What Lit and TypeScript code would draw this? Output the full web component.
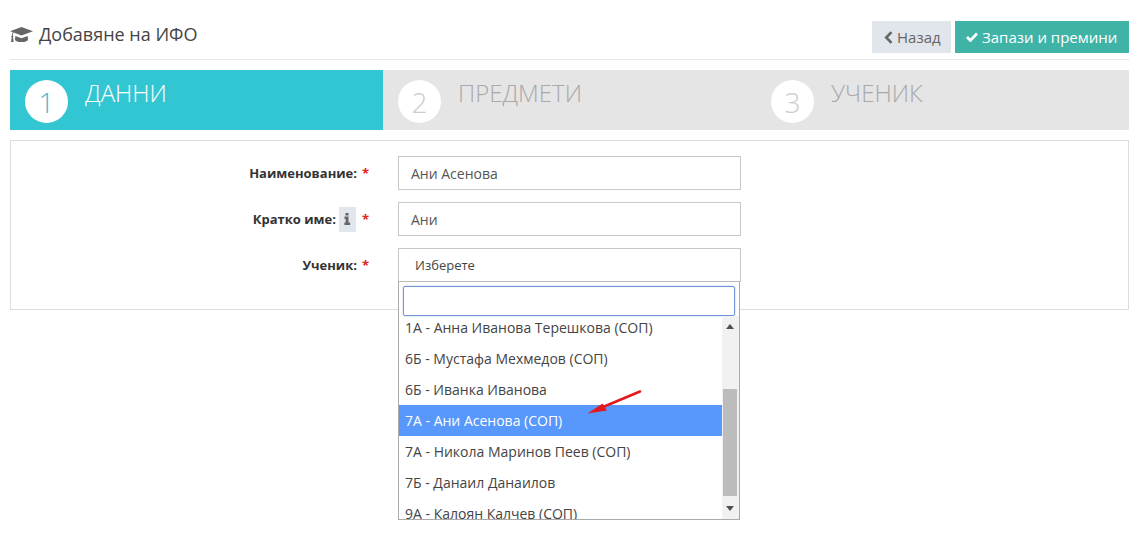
import { LitElement, html, css, svg } from "lit";
import { customElement } from "lit/decorators.js";

const items = [
  "1А - Анна Иванова Терешкова (СОП)",
  "6Б - Мустафа Мехмедов (СОП)",
  "6Б - Иванка Иванова",
  "7А - Ани Асенова (СОП)",
  "7А - Никола Маринов Пеев (СОП)",
  "7Б - Данаил Данаилов",
  "9А - Калоян Калчев (СОП)",
];

@customElement("app-root")
export class AppRoot extends LitElement {
  static styles = css`
    :host { display: block; height: 536px; overflow: hidden; background: #fff; font-family: "Open Sans", sans-serif; color: #333; box-sizing: border-box; padding: 0 11px 0 10px; }
    * { box-sizing: border-box; }
    .head { height: 60px; border-bottom: 1px solid #e7e7e7; display: flex; justify-content: space-between; padding-top: 21px; }
    .title { display: flex; align-items: center; gap: 6px; height: 26px; font-size: 18px; color: #444; }
    .title svg { width: 23px; height: 18px; flex: none; }
    .btns { display: flex; gap: 4px; }
    .btn { height: 32px; display: flex; align-items: center; gap: 4px; font-size: 15px; white-space: nowrap; }
    .back { width: 79px; background: #e1e5ec; color: #666; padding-left: 12px; }
    .save { width: 174px; background: #40b3a7; color: #fff; padding-left: 11px; }
    .steps { margin-top: 10px; height: 60px; display: grid; grid-template-columns: 373px 373px 373px; background: #e5e5e5; }
    .step { display: flex; padding: 10px 0 0 15px; color: #a9a9a9; }
    .step.on { background: #32c5d2; color: #fff; }
    .num { width: 43px; height: 43px; border-radius: 50%; background: #fff; color: #ccc; display: flex; align-items: center; justify-content: center; font-size: 28px; font-weight: 300; flex: none; }
    .on .num { color: #4fb6cc; }
    .label { margin: -4px 0 0 17px; font-size: 24px; font-weight: 300; line-height: 33px; }
    .panel { margin-top: 10px; height: 170px; border: 1px solid #ddd; padding: 15px 0 0 0; }
    .row { display: flex; height: 34px; margin-bottom: 12px; position: relative; }
    .lab { width: 346px; display: flex; justify-content: flex-end; align-items: center; gap: 3px; font-size: 13px; font-weight: 700; color: #333; white-space: nowrap; }
    .sp { width: 41px; flex: none; display: flex; align-items: center; padding-left: 5px; font-size: 13px; font-weight: 700; color: #e02222; }
    .info { width: 17px; height: 25px; margin-right: 1px; background: #e1e5ec; display: flex; align-items: center; justify-content: center; }
    .info svg { width: 7px; height: 12px; }
    .input { width: 343px; height: 34px; border: 1px solid #c6c8cc; display: flex; align-items: center; padding-left: 12px; font-size: 14px; color: #555; }
    .select { padding-left: 16px; font-size: 13px; color: #444; }
    .drop { position: absolute; left: 387px; top: 33px; width: 342px; height: 239px; background: #fff; border: 1px solid #aaa; border-top-color: #bbb; }
    .search { margin: 4px 0 0 4px; width: 332px; height: 30px; border: 1px solid #6f94d6; border-radius: 2px; box-shadow: 0 0 2px #a9c2ee; }
    .list { height: 203px; position: relative; overflow: hidden; }
    .opts { width: 323px; margin-top: -4px; }
    .opt { height: 31px; line-height: 31px; padding-left: 6px; font-size: 14px; color: #444; white-space: nowrap; }
    .opt.sel { background: #5897fb; color: #fff; }
    .bar { width: 17px; background: #f1f1f1; position: absolute; right: 0; top: 0; bottom: 0; }
    .thumb { position: absolute; left: 1px; right: 2px; top: 73px; height: 107px; background: #bcbcbc; }
    .up, .down { position: absolute; left: 4px; width: 0; height: 0; border-left: 4px solid transparent; border-right: 4px solid transparent; }
    .up { top: 8px; border-bottom: 5px solid #505050; }
    .down { bottom: 8px; border-top: 5px solid #505050; }
    .arrow { position: absolute; left: 586px; top: 389px; width: 56px; height: 26px; overflow: visible; }
  `;

  render() {
    return html`
      <div class="head">
        <div class="title">
          <svg viewBox="0 0 23 18"><path fill="#666" d="M11.5 2 23 6.2l-11.5 4.3L3.6 7.6l-.1.1c-.4.5-.6 1.6-.7 2.7.4.2.6.5.6.9 0 .3-.2.6-.4.8l.6 4.6c0 .2 0 .3-.2.3H1.3c-.2 0-.3-.1-.2-.3l.6-4.6c-.3-.2-.4-.5-.4-.8 0-.4.2-.7.6-.9.1-1.4.3-2.6.9-3.5L0 6.2 11.5 2Zm6.2 9 .3 3.4c0 1.4-2.9 2.6-6.5 2.6S5 15.8 5 14.4l.3-3.4 6.2 2.2 6.2-2.2Z"/></svg>
          <span>Добавяне на ИФО</span>
        </div>
        <div class="btns">
          <div class="btn back">
            <svg width="9" height="13" viewBox="0 0 9 13"><path fill="none" stroke="#666" stroke-width="2.6" d="M7.5 1.2 2.2 6.5l5.3 5.3"/></svg>
            <span>Назад</span>
          </div>
          <div class="btn save">
            <svg width="12" height="10" viewBox="0 0 12 10"><path fill="none" stroke="#fff" stroke-width="2.8" d="M1 5l3.4 3.4L11 1.6"/></svg>
            <span>Запази и премини</span>
          </div>
        </div>
      </div>
      <div class="steps">
        <div class="step on"><div class="num">1</div><div class="label">ДАННИ</div></div>
        <div class="step"><div class="num">2</div><div class="label">ПРЕДМЕТИ</div></div>
        <div class="step"><div class="num">3</div><div class="label">УЧЕНИК</div></div>
      </div>
      <div class="panel">
        <div class="row">
          <div class="lab">Наименование:</div><div class="sp">*</div>
          <div class="input">Ани Асенова</div>
        </div>
        <div class="row">
          <div class="lab">Кратко име:
            <span class="info"><svg viewBox="0 0 7 12"><path fill="#666" d="M1.5 0h3v2.4h-3zM.5 3.6h4v6h1.6V12H.4V9.6h1.2V6H.5z"/></svg></span>
          </div><div class="sp">*</div>
          <div class="input">Ани</div>
        </div>
        <div class="row">
          <div class="lab">Ученик:</div><div class="sp">*</div>
          <div class="input select">Изберете</div>
          <div class="drop">
            <div class="search"></div>
            <div class="list">
              <div class="opts">
                ${items.map((t, i) => html`<div class="opt ${i === 3 ? "sel" : ""}">${t}</div>`)}
              </div>
              <div class="bar"><div class="up"></div><div class="thumb"></div><div class="down"></div></div>
            </div>
          </div>
        </div>
      </div>
      <svg class="arrow" viewBox="586 389 56 26">
        ${svg`<path d="M640 391.5 603 407" stroke="#e3191f" stroke-width="2.6" stroke-linecap="round" fill="none"/><path d="M587.5 413.5 602.5 403.5 607 410.5z" fill="#e3191f"/>`}
      </svg>
    `;
  }
}
